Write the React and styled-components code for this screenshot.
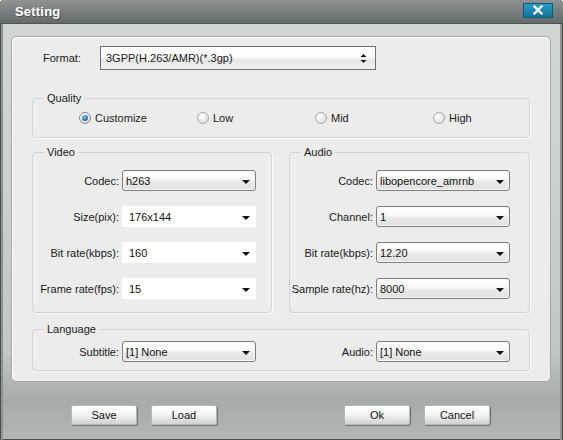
import React from 'react'
import styled, { createGlobalStyle } from 'styled-components'

const GlobalStyle = createGlobalStyle`
  html, body {
    margin: 0;
    padding: 0;
    width: 563px;
    height: 440px;
    overflow: hidden;
    background: #ffffff;
  }
  * { box-sizing: border-box; }
`

const Window = styled.div`
  width: 563px;
  height: 440px;
  display: flex;
  flex-direction: column;
  font-family: "Liberation Sans", Arial, sans-serif;
  font-size: 11px;
  color: #1a1a1a;
  border-radius: 4px 4px 0 0;
  overflow: hidden;
  background: linear-gradient(#d3d6d6 0%, #cdd0d0 40%, #c2c5c5 80%, #a7abab 91%, #b3b6b6 100%);
  box-shadow: inset 1px 0 0 #4a4f4f, inset 3px 0 0 #8d9292, inset -1px 0 0 #4a4f4f, inset -3px 0 0 #8d9292, inset 0 -1px 0 #4a4f4f;
`

const TitleBar = styled.div`
  height: 24px;
  flex: none;
  display: flex;
  align-items: center;
  justify-content: space-between;
  padding: 0 10px 0 15px;
  background: linear-gradient(#8f9595 0%, #7a8080 45%, #646b6b 100%);
  border-bottom: 1px solid #4d5353;
`

const Title = styled.div`
  color: #ffffff;
  font-weight: bold;
  font-size: 13px;
  letter-spacing: 0.2px;
  text-shadow: 1px 1px 0 rgba(0, 0, 0, 0.35);
`

const CloseButton = styled.div`
  width: 30px;
  height: 15px;
  margin-top: -3px;
  display: flex;
  align-items: center;
  justify-content: center;
  background: linear-gradient(#2b9cc3 0%, #1a86ad 55%, #0f6f95 100%);
  border: 1px solid #0d5c7c;
`

const Body = styled.div`
  flex: 1;
  display: flex;
  flex-direction: column;
  padding: 12px 0 0 11px;
`

const Panel = styled.div`
  width: 540px;
  height: 346px;
  display: flex;
  flex-direction: column;
  padding: 9px 0 0 20px;
  background: #ececec;
  border: 1px solid #a6a9a9;
  border-radius: 5px;
  box-shadow: inset 1px 1px 0 #ffffff;
`

const FormatRow = styled.div`
  display: flex;
  align-items: center;
  height: 24px;
`

const FormatLabel = styled.div`
  width: 68px;
  padding-left: 11px;
`

const FormatSelect = styled.div`
  width: 276px;
  height: 24px;
  display: flex;
  align-items: center;
  justify-content: space-between;
  padding: 0 8px 0 5px;
  border: 1px solid #6e6e6e;
  background: linear-gradient(#ffffff 0%, #fbfbfb 45%, #e6e6e6 60%, #f1f1f1 100%);
`

const Group = styled.div`
  position: relative;
  width: ${p => p.$w}px;
  height: ${p => p.$h}px;
  margin-top: ${p => p.$mt || 0}px;
  border: 1px solid #d3d3d3;
  border-radius: 4px;
  box-shadow: 1px 1px 0 #fafafa;
  padding: ${p => p.$pad || '0'};
`

const Legend = styled.div`
  position: absolute;
  top: -7px;
  left: 11px;
  padding: 0 3px;
  line-height: 13px;
  background: #ececec;
`

const RadioRow = styled.div`
  height: 100%;
  display: grid;
  grid-template-columns: repeat(4, 118px);
  align-items: center;
  padding-left: 46px;
`

const RadioItem = styled.label`
  display: flex;
  align-items: center;
  gap: 4px;
`

const RadioCircle = styled.span`
  width: 12px;
  height: 12px;
  border-radius: 50%;
  display: flex;
  align-items: center;
  justify-content: center;
  border: 1px solid ${p => (p.$on ? '#7e8a92' : '#a9a9a9')};
  background: radial-gradient(circle at 40% 35%, #ffffff 0%, #e9e9e9 55%, #cfcfcf 100%);

  &::after {
    content: '';
    display: ${p => (p.$on ? 'block' : 'none')};
    width: 6px;
    height: 6px;
    border-radius: 50%;
    background: radial-gradient(circle at 40% 35%, #7fc0e8 0%, #2b78a8 55%, #164f74 100%);
  }
`

const Columns = styled.div`
  display: flex;
  gap: 17px;
  margin-top: 14px;
`

const FieldList = styled.div`
  display: flex;
  flex-direction: column;
  gap: 15px;
`

const LangRow = styled.div`
  display: flex;
  gap: 34px;
`

const Row = styled.div`
  display: flex;
  align-items: center;
  gap: 3px;
`

const Label = styled.div`
  width: ${p => p.$w}px;
  text-align: right;
  white-space: nowrap;
`

const Select = styled.div`
  width: 134px;
  height: 21px;
  display: flex;
  align-items: center;
  justify-content: space-between;
  padding: 0 5px 0 ${p => (p.$edit ? 6 : 3)}px;
  color: #111;
  border: 1px solid ${p => (p.$edit ? '#ffffff' : '#7f7f7f')};
  border-radius: ${p => (p.$edit ? 0 : 3)}px;
  background: ${p =>
    p.$edit
      ? '#ffffff'
      : 'linear-gradient(#ffffff 0%, #fafafa 40%, #e8e8e8 60%, #e2e2e2 100%)'};
  box-shadow: ${p => (p.$edit ? 'none' : 'inset 0 0 0 1px #f6f6f6')};

  span:first-child {
    padding-top: 1px;
  }
`

const Arrow = styled.span`
  width: 0;
  height: 0;
  border-left: 4px solid transparent;
  border-right: 4px solid transparent;
  border-top: 4px solid #111;
  margin-top: 2px;
`

const ButtonBar = styled.div`
  display: flex;
  justify-content: space-between;
  margin-top: 23px;
  padding: 0 73px 0 60px;
`

const ButtonGroup = styled.div`
  display: flex;
  gap: 14px;
`

const Button = styled.button`
  width: 66px;
  height: 20px;
  padding: 0;
  font-family: "Liberation Sans", Arial, sans-serif;
  font-size: 11px;
  color: #111;
  border: 1px solid #b5b8b8;
  border-radius: 2px;
  background: linear-gradient(#ffffff 0%, #f6f6f6 45%, #e4e4e4 70%, #d2d2d2 100%);
  box-shadow: 1px 1px 1px rgba(40, 40, 40, 0.45);
  cursor: pointer;
`

const CloseIcon = () => (
  <svg width="10" height="10" viewBox="0 0 10 10">
    <path d="M1.5 1.5 L8.5 8.5 M8.5 1.5 L1.5 8.5" stroke="#fff" strokeWidth="2.4" strokeLinecap="square" />
  </svg>
)

const SpinArrows = () => (
  <svg width="7" height="11" viewBox="0 0 7 11">
    <path d="M3.5 1 L6.5 4 L0.5 4 Z M0.5 7 L6.5 7 L3.5 10 Z" fill="#111" />
  </svg>
)

const Field = ({ label, value, w, edit }) => (
  <Row>
    <Label $w={w}>{label}</Label>
    <Select $edit={edit}>
      <span>{value}</span>
      <Arrow />
    </Select>
  </Row>
)

const videoFields = [
  { label: 'Codec:', value: 'h263' },
  { label: 'Size(pix):', value: '176x144', edit: true },
  { label: 'Bit rate(kbps):', value: '160', edit: true },
  { label: 'Frame rate(fps):', value: '15', edit: true },
]

const audioFields = [
  { label: 'Codec:', value: 'libopencore_amrnb' },
  { label: 'Channel:', value: '1' },
  { label: 'Bit rate(kbps):', value: '12.20' },
  { label: 'Sample rate(hz):', value: '8000' },
]

const qualities = ['Customize', 'Low', 'Mid', 'High']

export default function App() {
  return (
    <>
      <GlobalStyle />
      <Window>
        <TitleBar>
          <Title>Setting</Title>
          <CloseButton>
            <CloseIcon />
          </CloseButton>
        </TitleBar>
        <Body>
          <Panel>
            <FormatRow>
              <FormatLabel>Format:</FormatLabel>
              <FormatSelect>
                <span>3GPP(H.263/AMR)(*.3gp)</span>
                <SpinArrows />
              </FormatSelect>
            </FormatRow>

            <Group $w={498} $h={40} $mt={28}>
              <Legend>Quality</Legend>
              <RadioRow>
                {qualities.map((q, i) => (
                  <RadioItem key={q}>
                    <RadioCircle $on={i === 0} />
                    {q}
                  </RadioItem>
                ))}
              </RadioRow>
            </Group>

            <Columns>
              <Group $w={240} $h={161} $pad="17px 0 0 0">
                <Legend>Video</Legend>
                <FieldList>
                  {videoFields.map(f => (
                    <Field key={f.label} w={86} {...f} />
                  ))}
                </FieldList>
              </Group>
              <Group $w={241} $h={161} $pad="17px 0 0 0">
                <Legend>Audio</Legend>
                <FieldList>
                  {audioFields.map(f => (
                    <Field key={f.label} w={83} {...f} />
                  ))}
                </FieldList>
              </Group>
            </Columns>

            <Group $w={498} $h={42} $mt={16} $pad="11px 0 0 0">
              <Legend>Language</Legend>
              <LangRow>
                <Field label="Subtitle:" value="[1] None" w={86} />
                <Field label="Audio:" value="[1] None" w={83} />
              </LangRow>
            </Group>
          </Panel>

          <ButtonBar>
            <ButtonGroup>
              <Button>Save</Button>
              <Button>Load</Button>
            </ButtonGroup>
            <ButtonGroup>
              <Button>Ok</Button>
              <Button>Cancel</Button>
            </ButtonGroup>
          </ButtonBar>
        </Body>
      </Window>
    </>
  )
}
